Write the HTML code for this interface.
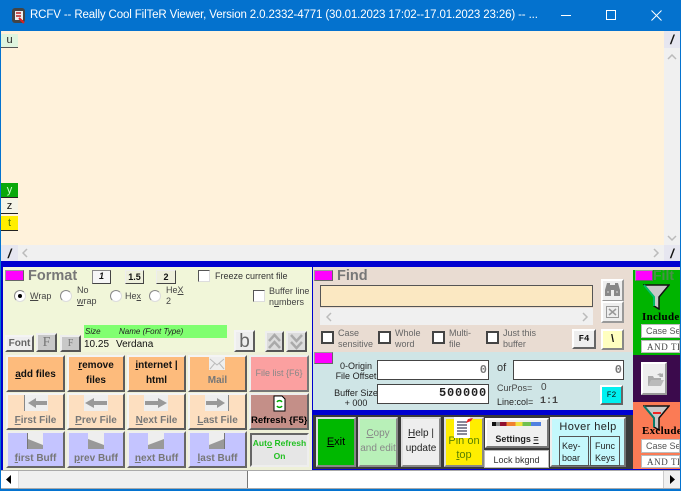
<!DOCTYPE html>
<html><head><meta charset="utf-8"><style>
html,body{margin:0;padding:0;width:681px;height:491px;overflow:hidden;background:#fff}
body{position:relative;font-family:"Liberation Sans",sans-serif;font-size:11px;color:#000}
div,span.a,svg{position:absolute;box-sizing:border-box}
.b{border:2px solid;border-color:#f4f4f4 #5c5c5c #5c5c5c #f4f4f4;text-align:center;line-height:1.25;font-weight:bold;font-size:11px;color:#111;white-space:nowrap;overflow:hidden}
.t{white-space:nowrap}
.g{color:#777}
.cb{background:#fff;border:2px solid #444;width:13px;height:13px}
.s{font-size:9px;line-height:11px;color:#444;white-space:nowrap}
.r{width:12px;height:12px;border-radius:50%;background:#fff;border:1px solid #888;border-right-color:#ddd;border-bottom-color:#ddd}
.m{background:#f0f;border:1px solid;border-color:#999 #666 #666 #999}
.mono{font-family:"Liberation Mono",monospace;font-weight:bold}
.ser{font-family:"Liberation Serif",serif}
u{text-decoration:underline}
</style></head><body>

<div style="left:0;top:0;width:681px;height:491px;background:#0473cf"></div>
<div style="left:0;top:0;width:681px;height:31px;background:#0472ce"></div>
<svg style="left:11px;top:6px" width="15" height="19" viewBox="0 0 15 19"><rect x="1" y="2" width="13" height="15" rx="3" fill="#444"/><rect x="4" y="5" width="8" height="9" fill="#eee"/><path d="M5 7h5M5 10h5" stroke="#b22" stroke-width="1.5"/><path d="M8 12l5 5" stroke="#d22" stroke-width="2"/></svg>
<div class="t" style="left:30px;top:8px;color:#fff;font-size:11.500px;line-height:15px;letter-spacing:-.13px">RCFV -- Really Cool FilTeR Viewer, Version 2.0.2332-4771 (30.01.2023 17:02--17.01.2023 23:26) -- ...</div>
<div style="left:561px;top:15px;width:10px;height:1px;background:#fff"></div>
<div style="left:606px;top:10px;width:10px;height:10px;border:1px solid #fff"></div>
<svg style="left:651px;top:10px" width="11" height="11"><path d="M.5.5l10 10M10.500.5l-10 10" stroke="#fff" stroke-width="1"/></svg>

<div style="left:1px;top:31px;width:664px;height:214px;background:#fff2db"></div>
<div style="left:1px;top:34px;width:17px;height:14px;background:#dff5df;border-bottom:1px solid #555;text-align:center;font-size:11px;line-height:13px;color:#222">u</div>
<div style="left:1px;top:183px;width:17px;height:15px;background:#0aa80a;border-bottom:1px solid #222;text-align:center;line-height:14px;color:#cfc">y</div>
<div style="left:1px;top:199px;width:17px;height:15px;background:#f4f4e8;border-bottom:1px solid #222;text-align:center;line-height:14px;color:#111">z</div>
<div style="left:1px;top:216px;width:17px;height:15px;background:#ffee00;border-bottom:1px solid #222;text-align:center;line-height:14px;color:#5a8000">t</div>

<div style="left:664px;top:31px;width:16px;height:214px;background:#f0f0f0"></div>
<div style="left:664px;top:31px;width:16px;height:17px;background:#e6e6f0;text-align:center;font:italic bold 13px/18px 'Liberation Sans',sans-serif;color:#111">/</div>
<svg style="left:667px;top:54px" width="10" height="7"><path d="M1 5l4-4 4 4" fill="none" stroke="#bbb" stroke-width="1.500"/></svg>
<svg style="left:667px;top:235px" width="10" height="7"><path d="M1 1l4 4 4-4" fill="none" stroke="#bbb" stroke-width="1.500"/></svg>
<div style="left:1px;top:245px;width:664px;height:16px;background:#f0f0f0"></div>
<div style="left:1px;top:245px;width:17px;height:16px;background:#e6e6f0;text-align:center;font:italic bold 13px/17px 'Liberation Sans',sans-serif;color:#111">/</div>
<svg style="left:22px;top:248px" width="7" height="10"><path d="M5 1L1 5l4 4" fill="none" stroke="#bbb" stroke-width="1.500"/></svg>
<svg style="left:653px;top:248px" width="7" height="10"><path d="M1 1l4 4-4 4" fill="none" stroke="#bbb" stroke-width="1.500"/></svg>
<div style="left:664px;top:245px;width:16px;height:16px;background:#e6e6f0;text-align:center;font:italic bold 13px/17px 'Liberation Sans',sans-serif;color:#111">/</div>

<div style="left:1px;top:261px;width:679px;height:209px;background:#0000d0"></div>

<!-- format panel -->
<div style="left:3px;top:267px;width:309px;height:85px;background:#f1f6d9"></div>
<div class="m" style="left:5px;top:270px;width:19px;height:11px"></div>
<div class="t" style="left:28px;top:268px;font-size:14.500px;font-weight:bold;color:#777;line-height:17px">Format</div>
<div class="b" style="left:92px;top:270px;width:19px;height:14px;font-size:9px;line-height:11px;font-style:italic;background:#f6f6f6;border-width:1px;border-color:#888 #444 #444 #888">1</div>
<div class="b" style="left:125px;top:270px;width:19px;height:14px;font-size:9px;line-height:12px;background:#eef0dc;border-width:1px;border-color:#eee #444 #444 #eee">1.5</div>
<div class="b" style="left:156px;top:270px;width:20px;height:14px;font-size:9px;line-height:12px;background:#eef0dc;border-width:1px;border-color:#eee #444 #444 #eee">2</div>
<div class="cb" style="left:198px;top:270px;border-width:1px;border-color:#555 #ddd #ddd #555;width:12px;height:12px"></div>
<div class="s" style="left:215px;top:271px;color:#333">Freeze current file</div>
<div class="r" style="left:14px;top:290px"></div><div style="left:18px;top:294px;width:4px;height:4px;border-radius:50%;background:#000"></div>
<div class="s" style="left:30px;top:291px"><u>W</u>rap</div>
<div class="r" style="left:60px;top:290px"></div>
<div class="s" style="left:77px;top:285px">No<br><u>w</u>rap</div>
<div class="r" style="left:110px;top:290px"></div>
<div class="s" style="left:125px;top:291px">He<u>x</u></div>
<div class="r" style="left:149px;top:290px"></div>
<div class="s" style="left:166px;top:285px">He<u>X</u><br>2</div>
<div class="cb" style="left:253px;top:290px;border-width:1px;border-color:#555 #ddd #ddd #555;width:12px;height:12px"></div>
<div class="s" style="left:269px;top:286px">Buffer line<br>n<u>u</u>mbers</div>
<div style="left:84px;top:325px;width:143px;height:13px;background:#80ff70"></div>
<div class="t" style="left:85px;top:326px;font-size:8px;font-style:italic;color:#222;line-height:11px">Size</div>
<div class="t" style="left:119px;top:326px;font-size:8px;font-style:italic;color:#222;line-height:11px">Name (Font Type)</div>
<div class="t" style="left:84px;top:338px;font-size:10px;line-height:13px;color:#111">10.25</div>
<div class="t" style="left:116px;top:338px;font-size:10px;line-height:13px;color:#111">Verdana</div>
<div class="b" style="left:5px;top:335px;width:29px;height:17px;background:#eee;font-size:10px;line-height:13px;color:#666">Font</div>
<div class="b ser" style="left:36px;top:333px;width:21px;height:19px;background:#c8c8c8;font-weight:normal;font-size:14px;line-height:15px;color:#777;border-color:#eee #555 #555 #eee">F</div>
<div class="b ser" style="left:60px;top:335px;width:21px;height:17px;background:#c8c8c8;font-weight:normal;font-size:10px;line-height:14px;color:#777;border-color:#eee #555 #555 #eee">F</div>
<div class="b" style="left:234px;top:330px;width:21px;height:22px;background:#eee;font-weight:normal;font-size:19px;line-height:19px;color:#666">b</div>
<div class="b" style="left:265px;top:331px;width:19px;height:21px;background:#dcdcdc;border-color:#eee #555 #555 #eee"></div>
<svg style="left:267px;top:333px" width="15" height="17"><path d="M2 8l5.500-6L13 8M2 15l5.500-6 5.500 6" fill="none" stroke="#aaa" stroke-width="2.500"/></svg>
<div class="b" style="left:286px;top:331px;width:21px;height:21px;background:#dcdcdc;border-color:#eee #555 #555 #eee"></div>
<svg style="left:289px;top:333px" width="15" height="17"><path d="M2 2l5.500 6L13 2M2 9l5.500 6L13 9" fill="none" stroke="#aaa" stroke-width="2.500"/></svg>

<!-- button panel -->
<div style="left:3px;top:352px;width:309px;height:118px;background:#eef0d8"></div>
<div class="b" style="left:6px;top:355px;width:59px;height:37px;background:#fdbb7c;font-size:10px;line-height:36px"><u>a</u>dd files</div>
<div class="b" style="left:67px;top:355px;width:58px;height:37px;background:#fdbb7c;font-size:10px;padding-top:1px;line-height:15px"><u>r</u>emove<br>files</div>
<div class="b" style="left:127px;top:355px;width:59px;height:37px;background:#fdbb7c;font-size:10px;padding-top:1px;line-height:15px"><u>i</u>nternet |<br>html</div>
<div class="b g" style="left:188px;top:355px;width:59px;height:37px;background:#fdbb7c;padding-top:17px;font-size:10px;line-height:14px">Mail</div>
<div style="left:209px;top:357px;width:16px;height:13px;background:#eee"></div>
<svg style="left:209px;top:357px" width="16" height="13"><path d="M1 2l7 6 7-6M1 12l5-6M15 12l-5-6" fill="none" stroke="#bbb"/></svg>
<div class="b g" style="left:249px;top:355px;width:60px;height:37px;background:#fba0a0;font-size:9px;line-height:33px;font-weight:normal;color:#888;border-color:#eee #777 #777 #eee">File list {F6}</div>

<div class="b g" style="left:6px;top:393px;width:59px;height:37px;background:#fddfc0;padding-top:19px;font-size:10px;line-height:13px"><u>F</u>irst File</div>
<div class="b g" style="left:67px;top:393px;width:58px;height:37px;background:#fddfc0;padding-top:19px;font-size:10px;line-height:13px"><u>P</u>rev File</div>
<div class="b g" style="left:127px;top:393px;width:59px;height:37px;background:#fddfc0;padding-top:19px;font-size:10px;line-height:13px"><u>N</u>ext File</div>
<div class="b g" style="left:188px;top:393px;width:59px;height:37px;background:#fddfc0;padding-top:19px;font-size:10px;line-height:13px"><u>L</u>ast File</div>
<div style="left:24px;top:395px;width:24px;height:16px;background:#eee"></div>
<svg style="left:24px;top:395px" width="24" height="16"><path d="M0 0v16" stroke="#888" stroke-width="2"/><path d="M4 8l8-5v3h11v4H12v3z" fill="#999"/></svg>
<div style="left:84px;top:395px;width:24px;height:16px;background:#eee"></div>
<svg style="left:84px;top:395px" width="24" height="16"><path d="M1 8l9-5v3h13v4H10v3z" fill="#999"/></svg>
<div style="left:144px;top:395px;width:24px;height:16px;background:#eee"></div>
<svg style="left:144px;top:395px" width="24" height="16"><path d="M23 8l-9-5v3H1v4h13v3z" fill="#999"/></svg>
<div style="left:205px;top:395px;width:24px;height:16px;background:#eee"></div>
<svg style="left:205px;top:395px" width="24" height="16"><path d="M24 0v16" stroke="#888" stroke-width="2"/><path d="M20 8l-8-5v3H1v4h11v3z" fill="#999"/></svg>
<div class="b" style="left:249px;top:393px;width:60px;height:37px;background:#c48f88;padding-top:19px;font-size:9.500px;line-height:13px;color:#000;border-color:#eee #666 #666 #eee">Refresh {F5}</div>
<svg style="left:273px;top:395px" width="13" height="17"><path d="M1 1h8l3 3v12H1z" fill="#fff" stroke="#000"/><path d="M4 7a3 3 0 0 1 5 0M9 11a3 3 0 0 1-5 0" fill="none" stroke="#0a0" stroke-width="1.500"/></svg>

<div class="b g" style="left:6px;top:431px;width:59px;height:37px;background:#c4c4ff;padding-top:19px;font-size:10px;line-height:13px;border-color:#eee #666 #666 #eee"><u>f</u>irst Buff</div>
<div class="b g" style="left:67px;top:431px;width:58px;height:37px;background:#c4c4ff;padding-top:19px;font-size:10px;line-height:13px;border-color:#eee #666 #666 #eee"><u>p</u>rev Buff</div>
<div class="b g" style="left:127px;top:431px;width:59px;height:37px;background:#c4c4ff;padding-top:19px;font-size:10px;line-height:13px;border-color:#eee #666 #666 #eee"><u>n</u>ext Buff</div>
<div class="b g" style="left:188px;top:431px;width:59px;height:37px;background:#c4c4ff;padding-top:19px;font-size:10px;line-height:13px;border-color:#eee #666 #666 #eee"><u>l</u>ast Buff</div>
<svg style="left:27px;top:433px" width="16" height="16"><rect width="16" height="16" fill="#eee"/><path d="M0 0v16" stroke="#777" stroke-width="2"/><path d="M1 6l15 6v4H1z" fill="#999"/></svg>
<svg style="left:88px;top:433px" width="16" height="16"><rect width="16" height="16" fill="#eee"/><path d="M0 6l16 6v4H0z" fill="#999"/></svg>
<svg style="left:148px;top:433px" width="16" height="16"><rect width="16" height="16" fill="#eee"/><path d="M16 6L0 12v4h16z" fill="#999"/></svg>
<svg style="left:209px;top:433px" width="16" height="16"><rect width="16" height="16" fill="#eee"/><path d="M16 0v16" stroke="#777" stroke-width="2"/><path d="M15 6L0 12v4h15z" fill="#999"/></svg>
<div class="b" style="left:250px;top:433px;width:59px;height:34px;background:#e6e6e6;color:#22c022;font-size:8.500px;line-height:13px;padding-top:2px;border-color:#666 #eee #eee #666">Aut<u>o</u> Refresh<br>On</div>

<!-- find panel -->
<div style="left:313px;top:267px;width:320px;height:85px;background:#e9dcd2"></div>
<div class="m" style="left:314px;top:270px;width:19px;height:11px"></div>
<div class="t" style="left:337px;top:268px;font-size:14.500px;font-weight:bold;color:#777;line-height:17px">Find</div>
<div style="left:320px;top:285px;width:273px;height:22px;background:#fbe8c2;border:1px solid #555"></div>
<div style="left:320px;top:308px;width:273px;height:17px;background:#f0f0f0"></div>
<svg style="left:326px;top:312px" width="7" height="10"><path d="M5 1L1 5l4 4" fill="none" stroke="#bbb" stroke-width="1.500"/></svg>
<svg style="left:582px;top:312px" width="7" height="10"><path d="M1 1l4 4-4 4" fill="none" stroke="#bbb" stroke-width="1.500"/></svg>
<div class="cb" style="left:321px;top:331px"></div><div class="s" style="left:338px;top:328px;color:#666">Case<br>sensitive</div>
<div class="cb" style="left:378px;top:331px"></div><div class="s" style="left:395px;top:328px;color:#666">Whole<br>word</div>
<div class="cb" style="left:432px;top:331px"></div><div class="s" style="left:449px;top:328px;color:#666">Multi-<br>file</div>
<div class="cb" style="left:486px;top:331px"></div><div class="s" style="left:503px;top:328px;color:#666">Just this<br>buffer</div>
<div class="b" style="left:601px;top:279px;width:23px;height:23px;background:#eee;border-color:#fff #999 #999 #fff"></div>
<svg style="left:604px;top:282px" width="17" height="15"><path d="M3 1h3v2h5V1h3l2 7v6h-6V8H7v6H1V8z" fill="#888"/><path d="M3 10h2M12 10h2" stroke="#ddd"/></svg>
<div class="b" style="left:601px;top:301px;width:23px;height:22px;background:#eee;border-color:#fff #999 #999 #fff"></div>
<svg style="left:606px;top:306px" width="13" height="12"><rect x=".5" y=".5" width="12" height="11" fill="none" stroke="#999"/><path d="M3 3l7 6M10 3l-7 6" stroke="#999" stroke-width="1.500"/></svg>
<div class="b mono" style="left:572px;top:329px;width:24px;height:20px;background:#eee;font-size:9px;line-height:16px;border-color:#fff #666 #666 #fff">F4</div>
<div class="b" style="left:601px;top:329px;width:23px;height:21px;background:#ffffc0;line-height:17px;border-color:#fff #888 #888 #fff">\</div>

<!-- offset panel -->
<div style="left:313px;top:352px;width:320px;height:58px;background:#cfe5e6"></div>
<div class="m" style="left:314px;top:352px;width:19px;height:12px"></div>
<div class="t" style="left:334px;top:361px;width:44px;font-size:9px;line-height:10px;text-align:center;color:#222">0-Origin<br>File Offset</div>
<div class="t" style="left:334px;top:388px;width:44px;font-size:9px;line-height:10px;text-align:center;color:#222">Buffer Size<br>+ 000</div>
<div class="mono g" style="left:377px;top:360px;width:112px;height:20px;background:#fff;border:1px solid #444;text-align:right;padding-right:1px;font-size:12px;line-height:19px">0</div>
<div class="mono" style="left:377px;top:384px;width:112px;height:20px;background:#fff;border:1px solid #444;text-align:right;padding-right:1px;font-size:12px;letter-spacing:.8px;line-height:17px;color:#222">500000</div>
<div class="t" style="left:497px;top:362px;font-size:11px;line-height:13px;color:#333">of</div>
<div class="mono g" style="left:513px;top:360px;width:111px;height:20px;background:#fff;border:1px solid #444;text-align:right;padding-right:1px;font-size:12px;line-height:19px">0</div>
<div class="t" style="left:497px;top:382px;font-size:9px;line-height:12px;color:#444">CurPos=</div>
<div class="t" style="left:541px;top:382px;font-size:10px;line-height:12px;color:#444">0</div>
<div class="t" style="left:497px;top:396px;font-size:9px;line-height:12px;color:#222">Line:col=</div>
<div class="t mono" style="left:540px;top:396px;font-size:10px;line-height:12px;color:#444">1:1</div>
<div class="b mono" style="left:600px;top:385px;width:23px;height:20px;background:#00f0f0;font-size:8px;line-height:17px;font-weight:normal;border-color:#fff #666 #666 #fff">F2</div>

<!-- bottom buttons -->
<div style="left:313px;top:410px;width:320px;height:5px;background:#0000d0"></div>
<div style="left:313px;top:415px;width:320px;height:54px;background:#3a3a3a"></div>
<div class="b" style="left:316px;top:417px;width:40px;height:50px;background:#00b800;font-weight:normal;font-size:11px;line-height:46px;color:#000;border-color:#ddd #888 #888 #ddd"><u>E</u>xit</div>
<div class="b" style="left:358px;top:417px;width:40px;height:50px;background:#b8f0b8;font-weight:normal;font-size:10px;line-height:15px;padding-top:7px;color:#888;border-color:#ddd #888 #888 #ddd"><u>C</u>opy<br>and edit</div>
<div class="b" style="left:401px;top:417px;width:40px;height:50px;background:#eee;font-weight:normal;font-size:10px;line-height:15px;padding-top:7px;color:#222;border-color:#ddd #888 #888 #ddd"><u>H</u>elp |<br>update</div>
<div class="b" style="left:444px;top:417px;width:40px;height:50px;background:#ffee00;font-weight:normal;font-size:11px;line-height:14px;padding-top:15px;color:#5a8000;border-color:#ddd #888 #888 #ddd">Pin on<br><u>t</u>op</div>
<svg style="left:454px;top:417px" width="20" height="22"><rect x="0" y="0" width="16" height="21" fill="#fff"/><path d="M3 5h10M3 8h10M3 11h10M3 14h10M3 17h10" stroke="#113" stroke-width="1"/><path d="M12 6l2-4 5-1-2 3z" fill="#e22"/></svg>
<div class="b" style="left:485px;top:418px;width:64px;height:30px;background:#f0f0f0;font-size:9px;line-height:12px;padding-top:13px;color:#222;border-color:#fff #777 #777 #fff">Settings <u>=</u></div>
<div style="left:492px;top:422px;width:49px;height:4px;background:linear-gradient(90deg,#111 0 8%,#888 8% 16%,#901030 16% 30%,#f08030 30% 48%,#f0e040 48% 62%,#70c050 62% 80%,#5080e0 80%)"></div>
<div class="t" style="left:484px;top:450px;width:65px;height:18px;background:#fff;border:1px solid #bbb;font-size:9px;line-height:18px;text-align:center;color:#333">Lock bkgnd</div>
<div style="left:550px;top:417px;width:76px;height:50px;background:#c4f8fc;border:2px solid;border-color:#eee #777 #777 #eee"></div>
<div class="t" style="left:552px;top:420px;width:72px;text-align:center;font-size:11px;letter-spacing:.4px;line-height:14px;color:#222">Hover help</div>
<div class="t" style="left:559px;top:436px;width:30px;height:30px;border:1px solid #555;font-size:9px;line-height:12px;padding:3px 0 0 2px;color:#222">Key-<br>boar</div>
<div class="t" style="left:590px;top:436px;width:30px;height:30px;border:1px solid #555;font-size:9px;line-height:12px;padding-top:3px;text-align:center;color:#222">Func<br>Keys</div>

<!-- filter -->
<div style="left:633px;top:267px;width:47px;height:3px;background:#e9dcd2"></div>
<div style="left:633px;top:270px;width:47px;height:85px;background:#00b400"></div>
<div class="m" style="left:635px;top:270px;width:18px;height:11px"></div>
<div class="t" style="left:653px;top:268px;width:27px;overflow:hidden;font-size:14px;font-weight:bold;line-height:15px;color:#4a8f4a">Filt</div>
<svg style="left:643px;top:284px" width="27" height="26"><path d="M1 1h25L16 13v12l-5-3V13z" fill="#c8c8c8" stroke="#111" stroke-width="1.500"/><path d="M1 1l10 12v9" fill="none" stroke="#0b6" stroke-width="2"/></svg>
<div class="t ser" style="left:642px;top:311px;width:38px;overflow:hidden;font-size:11px;font-weight:bold;line-height:13px;letter-spacing:.3px">Include</div>
<div class="t" style="left:641px;top:324px;width:39px;height:14px;background:#fff;border:1px solid #bbb;overflow:hidden;font-size:9px;line-height:13px;padding-left:4px;color:#555">Case Sensitive</div>
<div class="t ser" style="left:641px;top:340px;width:39px;height:13px;background:#fff;border:1px solid #bbb;overflow:hidden;font-size:9px;line-height:12px;padding-left:5px;letter-spacing:.6px;color:#444">AND TH</div>
<div style="left:633px;top:355px;width:47px;height:47px;background:#3b0a4c"></div>
<div class="b" style="left:641px;top:362px;width:26px;height:33px;background:#eee;border-color:#fff #999 #999 #fff"></div>
<svg style="left:647px;top:372px" width="18" height="15"><path d="M1 4h5l1 2h7v2H5l-3 6H1z" fill="#aaa"/><path d="M4 8h13l-3 6H1z" fill="#bbb"/><path d="M10 3q3-3 5-1l1-1v4h-4l1-1q-1-1-3-1z" fill="#aaa"/></svg>
<div style="left:633px;top:402px;width:47px;height:67px;background:#fb7b55"></div>
<svg style="left:643px;top:405px" width="27" height="26"><path d="M1 1h25L16 13v12l-5-3V13z" fill="#c8c8c8" stroke="#111" stroke-width="1.500"/><path d="M1 1l10 12v9" fill="none" stroke="#0a7a6a" stroke-width="2"/><path d="M10 8h8" stroke="#e22" stroke-width="2"/></svg>
<div class="t ser" style="left:642px;top:425px;width:38px;overflow:hidden;font-size:11px;font-weight:bold;line-height:13px;letter-spacing:.3px">Exclude</div>
<div class="t" style="left:641px;top:439px;width:39px;height:14px;background:#fff;border:1px solid #bbb;overflow:hidden;font-size:9px;line-height:13px;padding-left:4px;color:#555">Case Sensitive</div>
<div class="t ser" style="left:641px;top:455px;width:39px;height:13px;background:#fff;border:1px solid #bbb;overflow:hidden;font-size:9px;line-height:12px;padding-left:5px;letter-spacing:.6px;color:#444">AND TH</div>

<!-- bottom scrollbar -->
<div style="left:1px;top:470px;width:679px;height:19px;background:#fff;border-top:1px solid #aaa;border-bottom:1px solid #aaa"></div>
<div style="left:18px;top:471px;width:230px;height:17px;background:#f0f0f0;border-right:1px solid #777;border-left:1px solid #ddd"></div>
<svg style="left:6px;top:475px" width="6" height="9"><path d="M5 0v9L0 4.500z" fill="#000"/></svg>
<div style="left:663px;top:471px;width:17px;height:17px;background:#f0f0f0;border-left:1px solid #ccc"></div>
<svg style="left:670px;top:475px" width="6" height="9"><path d="M0 0v9l5-4.500z" fill="#000"/></svg>
</body></html>
